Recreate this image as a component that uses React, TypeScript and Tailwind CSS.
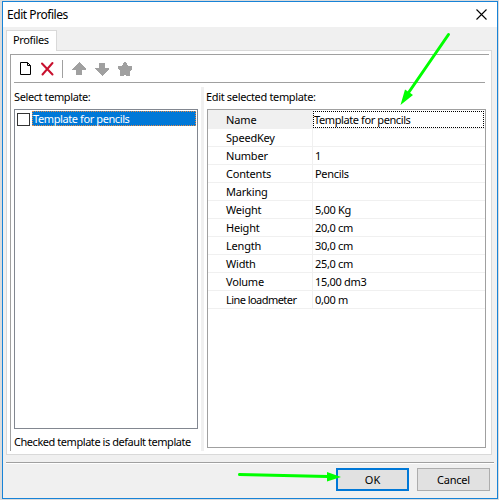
import React from 'react';

const rows = [
  { name: 'SpeedKey', value: '' },
  { name: 'Number', value: '1' },
  { name: 'Contents', value: 'Pencils' },
  { name: 'Marking', value: '' },
  { name: 'Weight', value: '5,00 Kg' },
  { name: 'Height', value: '20,0 cm' },
  { name: 'Length', value: '30,0 cm' },
  { name: 'Width', value: '25,0 cm' },
  { name: 'Volume', value: '15,00 dm3' },
  { name: 'Line loadmeter', value: '0,00 m' },
];

function Toolbar() {
  return (
    <div className="ml-[3px] mr-[4px] h-[28px] shrink-0 border-b border-[#a0a0a0]">
      <svg width="130" height="27" viewBox="14 55 130 27" shapeRendering="crispEdges">
        <path d="M20.5 62.5h7l3 3v9h-10zM27.5 62.5v3h3" fill="#fff" stroke="#000" shapeRendering="auto" />
        <path d="M42 63.5l10.5 11M52.5 63L42.5 74.5" stroke="#c8102e" strokeWidth="2" strokeLinecap="round" shapeRendering="auto" />
        <path d="M62.5 60v18" stroke="#a0a0a0" />
        <path d="M79 62l7 7v1h-4v5h-6v-5h-4v-1z" fill="#a0a0a0" />
        <path d="M99 63h6v5h4v1l-7 7-7-7v-1h4z" fill="#a0a0a0" />
        <path d="M124 62h2l2 4h4v3l-2 2v5h-3l-2-1-2 1h-3v-5l-2-2v-3h4z" fill="#a0a0a0" />
      </svg>
    </div>
  );
}

function TemplateList() {
  return (
    <section className="flex w-[187px] shrink-0 flex-col pl-[3px]">
      <div className="h-[26px] pt-[7px] tracking-[-0.4px]">Select template:</div>
      <div className="h-[320px] w-[184px] shrink-0 border border-[#828790]">
        <div className="flex h-[17px] items-center">
          <span className="ml-[2px] mt-px h-[13px] w-[13px] shrink-0 border border-[#333] bg-white" />
          <span className="ml-[2px] mr-px flex h-[15px] flex-1 items-center border border-dotted border-[#e58a45] bg-[#0078d7] text-white tracking-[-0.4px]">
            Template for pencils
          </span>
        </div>
      </div>
      <div className="mt-[6px] tracking-[-0.45px]">Checked template is default template</div>
    </section>
  );
}

function PropertyGrid() {
  return (
    <section className="flex w-[282px] flex-col pl-[3px]">
      <div className="h-[26px] pt-[7px] -ml-px tracking-[-0.34px]">Edit selected template:</div>
      <div className="h-[339px] w-[279px] shrink-0 border border-[#a0a0a0] tracking-[-0.32px]">
        <div className="flex h-[19px] border-b border-[#f0f0f0]">
          <div className="flex w-[105px] items-center bg-[#f0f0f0] pl-[18px] pt-px tracking-[-0.1px]">Name</div>
          <div className="mt-px mr-px flex h-[17px] flex-1 items-center border border-dotted border-black tracking-[-0.4px]">Template for pencils</div>
        </div>
        {rows.map((row) => (
          <div key={row.name} className="flex h-[18px] border-b border-[#f0f0f0]">
            <div
              className={`flex w-[105px] items-center border-r border-[#f0f0f0] pl-[18px] ${
                row.name === 'Line loadmeter' ? 'tracking-[-0.55px]' : 'tracking-[-0.2px]'
              }`}
            >
              {row.name}
            </div>
            <div className="flex flex-1 items-center pl-[2px]">{row.value}</div>
          </div>
        ))}
      </div>
    </section>
  );
}

export default function App() {
  return (
    <div className="h-[500px] w-[499px] bg-[#dcdcdc] pl-[2px] pt-px font-['Noto_Sans','Liberation_Sans',sans-serif] text-[11px] leading-[14px] whitespace-pre text-black">
      <div className="relative flex h-[498px] w-[496px] flex-col border border-[#1883d7] bg-[#f0f0f0]">
        <header className="flex h-[25px] shrink-0 items-center justify-between bg-white pl-[4px] pr-[10px]">
          <span className="text-[12px] tracking-[-0.45px]">Edit Profiles</span>
          <svg width="11" height="11" viewBox="0 0 11 11">
            <path d="M.5.5l10 10M10.5.5l-10 10" stroke="#000" strokeWidth="1.1" />
          </svg>
        </header>
        <div className="flex h-[23px] shrink-0 pl-[3px] pt-[3px]">
          <div className="z-10 h-[21px] w-[51px] border border-b-0 border-[#d9d9d9] bg-white pl-[6px] pt-[2px] tracking-[-0.35px]">Profiles</div>
        </div>
        <main className="ml-[3px] h-[405px] w-[486px] shrink-0 border border-[#d9d9d9] bg-white pl-[3px] pt-[3px]">
          <div className="flex h-[397px] w-[479px] flex-col border-l border-t border-[#a0a0a0]">
            <Toolbar />
            <div className="flex min-h-0 flex-1">
              <TemplateList />
              <div className="ml-[3px] mt-[4px] w-[3px] shrink-0 bg-[#f0f0f0]" />
              <PropertyGrid />
            </div>
          </div>
        </main>
        <footer className="mx-[3px] mt-[7px] flex h-[30px] border-t border-[#a0a0a0] shadow-[inset_0_1px_0_#fff]">
          <button className="ml-[330px] mt-[5px] h-[23px] w-[73px] border-2 border-[#0078d7] bg-[#e1e1e1]">OK</button>
          <button className="ml-[8px] mt-[5px] h-[23px] w-[73px] border border-[#adadad] bg-[#e1e1e1] tracking-[-0.2px]">Cancel</button>
        </footer>
        <svg className="pointer-events-none absolute -left-[3px] -top-[2px] z-20" width="499" height="500" fill="#0f0" stroke="#0f0">
          <path d="M448.500 34.500L409 92M239.500 474.500l88 2" strokeWidth="3" strokeLinecap="round" fill="none" />
          <path d="M400.500 105l4.500-15.500 3 2 1.500 1 3.500 2.500z M341 477l-14-5v9.500z" stroke="none" />
        </svg>
      </div>
    </div>
  );
}
